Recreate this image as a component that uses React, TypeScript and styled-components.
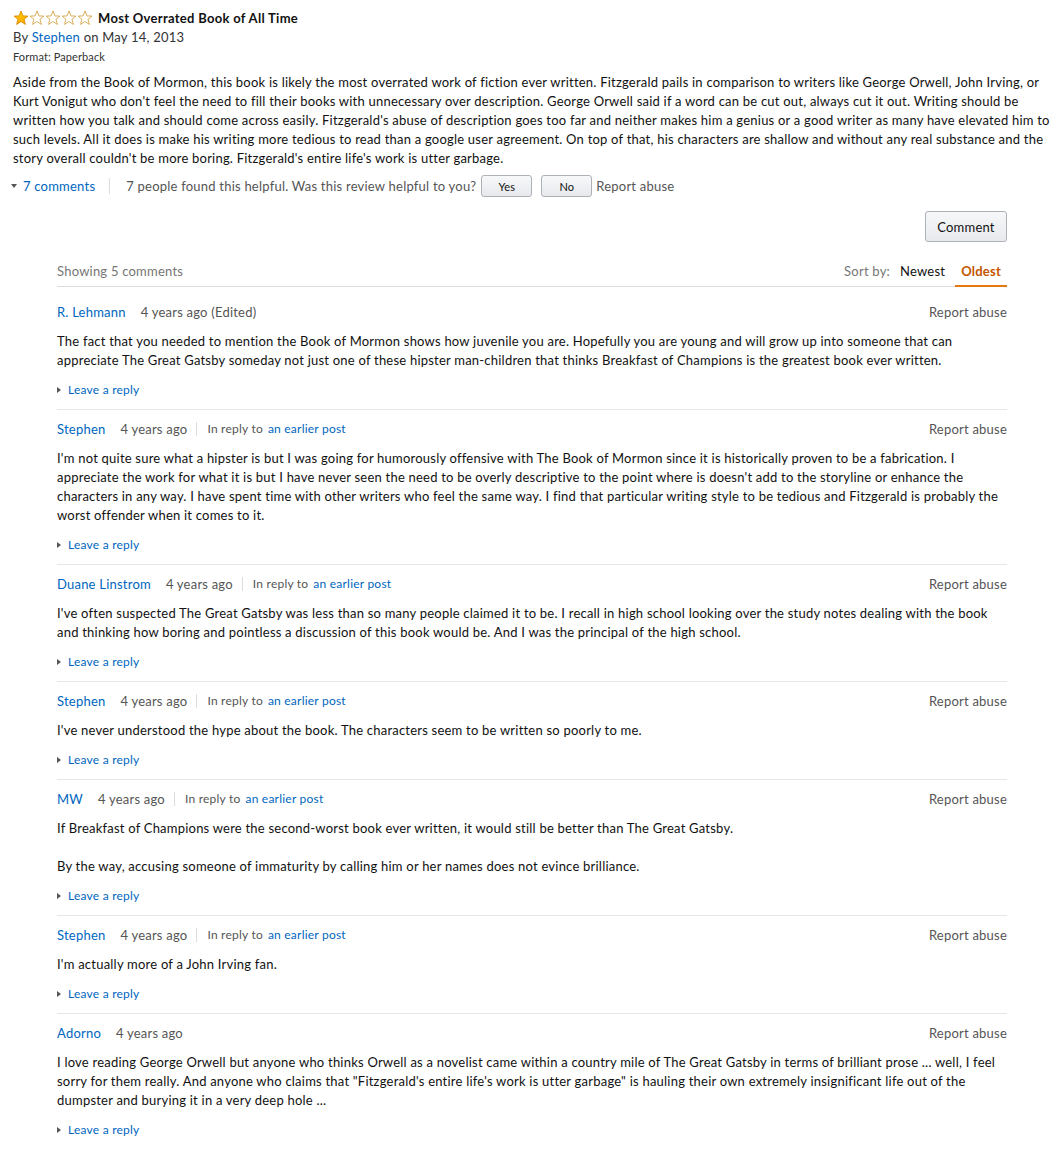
import React from "react";
import styled, { createGlobalStyle } from "styled-components";

const Global = createGlobalStyle`
  html, body { margin: 0; padding: 0; background: #fff; }
  body { font-family: Lato, "Open Sans", Arial, sans-serif; color: #111; font-size: 13px; letter-spacing: 0.22px; }
`;

const Page = styled.div`
  padding: 8px 14px 20px 13px;
  width: 1037px;
  box-sizing: content-box;
`;

const TitleRow = styled.div`
  display: flex;
  align-items: center;
  gap: 5px;
  height: 19px;
`;

const Stars = styled.div`
  display: flex;
`;

const Title = styled.span`
  font-weight: 700;
  font-size: 13px;
  letter-spacing: 0.3px;
  color: #111;
`;

const ByLine = styled.div`
  font-size: 13px;
  line-height: 19px;
  color: #333;
  margin-top: 1px;
`;

const Link = styled.a<{ $small?: boolean }>`
  color: #0066c0;
  text-decoration: none;
  font-size: ${(p) => (p.$small ? "12px" : "13px")};
`;

const Format = styled.div`
  font-size: 11px;
  line-height: 20px;
  color: #333;
  letter-spacing: 0.1px;
`;

const Body = styled.p`
  margin: 6px 0 0;
  font-size: 13px;
  line-height: 19px;
  color: #111;
`;

const HelpRow = styled.div`
  display: flex;
  align-items: center;
  margin-top: 6px;
  height: 24px;
  font-size: 13px;
  color: #555;
`;

const Caret = styled.span`
  display: inline-block;
  width: 0;
  height: 0;
  border-left: 3px solid transparent;
  border-right: 3px solid transparent;
  border-top: 4px solid #555;
  margin: 0 6px 0 -2px;
`;

const VSep = styled.span`
  width: 1px;
  height: 16px;
  background: #ddd;
  margin: 0 16px 0 14px;
`;

const SmallButton = styled.button`
  font-family: inherit;
  font-size: 11px;
  letter-spacing: 0.1px;
  color: #111;
  width: 51px;
  height: 22px;
  border: 1px solid #adb1b8;
  border-radius: 3px;
  background: linear-gradient(#f7f8fa, #e7e9ec);
  margin-left: 5px;
  margin-right: 4px;
  padding: 0;
`;

const Report = styled.span`
  color: #555;
  font-size: 13px;
`;

const CommentBar = styled.div`
  display: flex;
  justify-content: flex-end;
  margin-top: 13px;
  padding-right: 43px;
`;

const BigButton = styled.button`
  font-family: inherit;
  font-size: 13px;
  letter-spacing: 0.2px;
  color: #111;
  width: 82px;
  height: 31px;
  border: 1px solid #adb1b8;
  border-radius: 3px;
  background: linear-gradient(#f7f8fa, #e7e9ec);
  padding: 0;
`;

const Section = styled.div`
  margin: 14px 43px 0 44px;
`;

const SectionHead = styled.div`
  display: flex;
  justify-content: space-between;
  align-items: stretch;
  border-bottom: 1px solid #ddd;
  height: 30px;
`;

const Showing = styled.span`
  color: #767676;
  font-size: 13px;
  align-self: center;
`;

const Sort = styled.div`
  display: flex;
  align-items: stretch;
  font-size: 13px;
`;

const SortLabel = styled.span`
  color: #767676;
  display: flex;
  align-items: center;
  margin-right: 4px;
`;

const SortTab = styled.span<{ $active?: boolean }>`
  display: flex;
  align-items: center;
  padding: 0 6px;
  margin-bottom: -1px;
  color: ${(p) => (p.$active ? "#c45500" : "#111")};
  font-weight: ${(p) => (p.$active ? 700 : 400)};
  border-bottom: 2px solid ${(p) => (p.$active ? "#e47911" : "transparent")};
  &:last-child { margin-left: 4px; }
`;

const Comment = styled.div<{ $first?: boolean; $last?: boolean }>`
  border-bottom: 1px solid ${(p) => (p.$last ? "transparent" : "#e7e7e7")};
  padding: ${(p) => (p.$first ? "15px" : "9px")} 0 10px;
`;

const CHead = styled.div`
  display: flex;
  align-items: center;
  height: 19px;
  font-size: 13px;
`;

const Age = styled.span`
  color: #555;
  margin-left: 15px;
`;

const ReplySep = styled.span`
  width: 1px;
  height: 14px;
  background: #ddd;
  margin: 0 10px 0 9px;
`;

const InReply = styled.span`
  color: #555;
  font-size: 12px;
  margin-right: 5px;
`;

const Spacer = styled.span`
  flex: 1;
`;

const CText = styled.div`
  margin-top: 11px;
  font-size: 13px;
  line-height: 19px;
  color: #111;
  & p { margin: 0; }
  & p + p { margin-top: 19px; }
`;

const LeaveRow = styled.div`
  display: flex;
  align-items: center;
  margin-top: 10px;
  height: 19px;
`;

const RightCaret = styled.span`
  display: inline-block;
  width: 0;
  height: 0;
  border-top: 3px solid transparent;
  border-bottom: 3px solid transparent;
  border-left: 4px solid #555;
  margin-right: 7px;
`;

const Star = ({ filled }: { filled?: boolean }) => (
  <svg width="16" height="16" viewBox="0 0 16 16">
    <defs>
      <linearGradient id="sg" x1="0" y1="0" x2="0" y2="1">
        <stop offset="0" stopColor="#ffce00" />
        <stop offset="1" stopColor="#ffa700" />
      </linearGradient>
    </defs>
    <polygon
      points="8,1 9.9,5.9 15,6.1 11,9.3 12.4,14.4 8,11.5 3.6,14.4 5,9.3 1,6.1 6.1,5.9"
      fill={filled ? "url(#sg)" : "#fff"}
      stroke={filled ? "#d98a00" : "#d5a64a"}
      strokeWidth="0.9"
      strokeLinejoin="round"
    />
  </svg>
);

type C = { name: string; edited?: boolean; reply?: boolean; paras: string[] };

const comments: C[] = [
  {
    name: "R. Lehmann",
    edited: true,
    paras: [
      "The fact that you needed to mention the Book of Mormon shows how juvenile you are. Hopefully you are young and will grow up into someone that can appreciate The Great Gatsby someday not just one of these hipster man-children that thinks Breakfast of Champions is the greatest book ever written.",
    ],
  },
  {
    name: "Stephen",
    reply: true,
    paras: [
      "I'm not quite sure what a hipster is but I was going for humorously offensive with The Book of Mormon since it is historically proven to be a fabrication. I appreciate the work for what it is but I have never seen the need to be overly descriptive to the point where is doesn't add to the storyline or enhance the characters in any way. I have spent time with other writers who feel the same way. I find that particular writing style to be tedious and Fitzgerald is probably the worst offender when it comes to it.",
    ],
  },
  {
    name: "Duane Linstrom",
    reply: true,
    paras: [
      "I've often suspected The Great Gatsby was less than so many people claimed it to be. I recall in high school looking over the study notes dealing with the book and thinking how boring and pointless a discussion of this book would be. And I was the principal of the high school.",
    ],
  },
  {
    name: "Stephen",
    reply: true,
    paras: ["I've never understood the hype about the book. The characters seem to be written so poorly to me."],
  },
  {
    name: "MW",
    reply: true,
    paras: [
      "If Breakfast of Champions were the second-worst book ever written, it would still be better than The Great Gatsby.",
      "By the way, accusing someone of immaturity by calling him or her names does not evince brilliance.",
    ],
  },
  {
    name: "Stephen",
    reply: true,
    paras: ["I'm actually more of a John Irving fan."],
  },
  {
    name: "Adorno",
    paras: [
      "I love reading George Orwell but anyone who thinks Orwell as a novelist came within a country mile of The Great Gatsby in terms of brilliant prose ... well, I feel sorry for them really. And anyone who claims that \"Fitzgerald's entire life's work is utter garbage\" is hauling their own extremely insignificant life out of the dumpster and burying it in a very deep hole ...",
    ],
  },
];

export default function App() {
  return (
    <>
      <Global />
      <Page>
        <TitleRow>
          <Stars>
            <Star filled />
            <Star />
            <Star />
            <Star />
            <Star />
          </Stars>
          <Title>Most Overrated Book of All Time</Title>
        </TitleRow>
        <ByLine>
          By <Link href="#">Stephen</Link> on May 14, 2013
        </ByLine>
        <Format>Format: Paperback</Format>
        <Body>
          Aside from the Book of Mormon, this book is likely the most overrated work of fiction ever written. Fitzgerald
          pails in comparison to writers like George Orwell, John Irving, or Kurt Vonigut who don't feel the need to fill
          their books with unnecessary over description. George Orwell said if a word can be cut out, always cut it out.
          Writing should be written how you talk and should come across easily. Fitzgerald's abuse of description goes too
          far and neither makes him a genius or a good writer as many have elevated him to such levels. All it does is make
          his writing more tedious to read than a google user agreement. On top of that, his characters are shallow and
          without any real substance and the story overall couldn't be more boring. Fitzgerald's entire life's work is
          utter garbage.
        </Body>
        <HelpRow>
          <Caret />
          <Link href="#">7 comments</Link>
          <VSep />
          <span>7 people found this helpful. Was this review helpful to you?</span>
          <SmallButton>Yes</SmallButton>
          <SmallButton>No</SmallButton>
          <Report>Report abuse</Report>
        </HelpRow>
        <CommentBar>
          <BigButton>Comment</BigButton>
        </CommentBar>
        <Section>
          <SectionHead>
            <Showing>Showing 5 comments</Showing>
            <Sort>
              <SortLabel>Sort by:</SortLabel>
              <SortTab>Newest</SortTab>
              <SortTab $active>Oldest</SortTab>
            </Sort>
          </SectionHead>
          {comments.map((c, i) => (
            <Comment key={i} $first={i === 0} $last={i === comments.length - 1}>
              <CHead>
                <Link href="#">{c.name}</Link>
                <Age>4 years ago{c.edited ? " (Edited)" : ""}</Age>
                {c.reply && (
                  <>
                    <ReplySep />
                    <InReply>In reply to</InReply>
                    <Link href="#" $small>
                      an earlier post
                    </Link>
                  </>
                )}
                <Spacer />
                <Report>Report abuse</Report>
              </CHead>
              <CText>
                {c.paras.map((p, j) => (
                  <p key={j}>{p}</p>
                ))}
              </CText>
              <LeaveRow>
                <RightCaret />
                <Link href="#" $small>
                  Leave a reply
                </Link>
              </LeaveRow>
            </Comment>
          ))}
        </Section>
      </Page>
    </>
  );
}
